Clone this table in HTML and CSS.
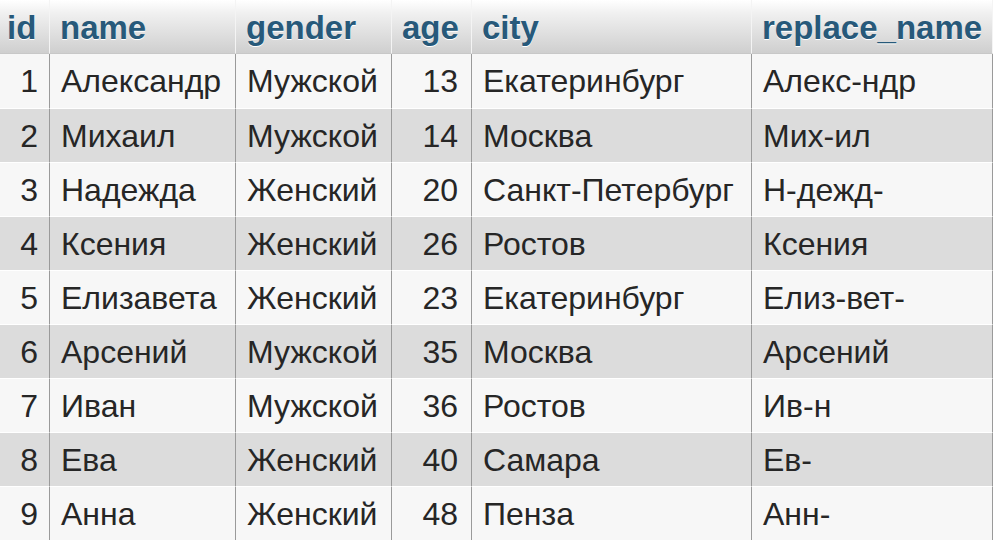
FILE: index.html
```html
<!DOCTYPE html>
<html lang="ru">
<head>
<meta charset="utf-8">
<title>Таблица</title>
<link rel="stylesheet" href="styles.css">
</head>
<body>
<table class="data">
  <colgroup>
    <col class="c-id"><col class="c-name"><col class="c-gender"><col class="c-age"><col class="c-city"><col class="c-rep">
  </colgroup>
  <thead>
    <tr><th class="num">id</th><th>name</th><th>gender</th><th class="num">age</th><th>city</th><th>replace_name</th></tr>
  </thead>
  <tbody>
    <tr><td class="num">1</td><td>Александр</td><td>Мужской</td><td class="num">13</td><td>Екатеринбург</td><td>Алекс-ндр</td></tr>
    <tr><td class="num">2</td><td>Михаил</td><td>Мужской</td><td class="num">14</td><td>Москва</td><td>Мих-ил</td></tr>
    <tr><td class="num">3</td><td>Надежда</td><td>Женский</td><td class="num">20</td><td>Санкт-Петербург</td><td>Н-дежд-</td></tr>
    <tr><td class="num">4</td><td>Ксения</td><td>Женский</td><td class="num">26</td><td>Ростов</td><td>Ксения</td></tr>
    <tr><td class="num">5</td><td>Елизавета</td><td>Женский</td><td class="num">23</td><td>Екатеринбург</td><td>Елиз-вет-</td></tr>
    <tr><td class="num">6</td><td>Арсений</td><td>Мужской</td><td class="num">35</td><td>Москва</td><td>Арсений</td></tr>
    <tr><td class="num">7</td><td>Иван</td><td>Мужской</td><td class="num">36</td><td>Ростов</td><td>Ив-н</td></tr>
    <tr><td class="num">8</td><td>Ева</td><td>Женский</td><td class="num">40</td><td>Самара</td><td>Ев-</td></tr>
    <tr><td class="num">9</td><td>Анна</td><td>Женский</td><td class="num">48</td><td>Пенза</td><td>Анн-</td></tr>
  </tbody>
</table>
</body>
</html>
```

FILE: styles.css
```css
html, body {
  margin: 0;
  padding: 0;
  background: #ffffff;
}
.data {
  border-collapse: separate;
  border-spacing: 0;
  table-layout: fixed;
  width: 993px;
  font-family: "Liberation Sans", Arial, sans-serif;
}
.c-id { width: 50px; }
.c-name { width: 186px; }
.c-gender { width: 156px; }
.c-age { width: 80px; }
.c-city { width: 280px; }
.c-rep { width: 241px; }

.data th, .data td {
  box-sizing: border-box;
  padding: 0 8px 0 11px;
  white-space: nowrap;
  overflow: hidden;
  text-align: left;
  border-right: 1px solid #9a9a9a;
}
.data th {
  height: 54px;
  font-size: 33px;
  font-weight: bold;
  color: #27597a;
  text-shadow: 0 1px 0 #ffffff;
  background: linear-gradient(#ffffff 0%, #f0f0f0 25%, #cfcfcf 100%);
  border-right: 1px solid #f4f4f4;
  border-bottom: 1px solid #c8c8c8;
  vertical-align: middle;
  padding-top: 2px;
  padding-left: 10px;
}
.data td {
  height: 54px;
  font-size: 32px;
  color: #262626;
  border-top: 1px solid #ffffff;
  vertical-align: middle;
  padding-top: 1px;
}
.data tbody tr:first-child td { border-top: 0; }
.data tbody tr:nth-child(odd) td { background: #f7f7f7; }
.data tbody tr:nth-child(even) td { background: #dcdcdc; }
.data .num {
  text-align: right;
  padding-right: 11px;
  padding-left: 4px;
}
.data td.num:nth-child(4) { padding-right: 13px; }
.data th.num:nth-child(4) { padding-right: 4px; padding-left: 10px; text-align: left; }
.data th:first-child { padding-left: 7px; text-align: left; }
```
